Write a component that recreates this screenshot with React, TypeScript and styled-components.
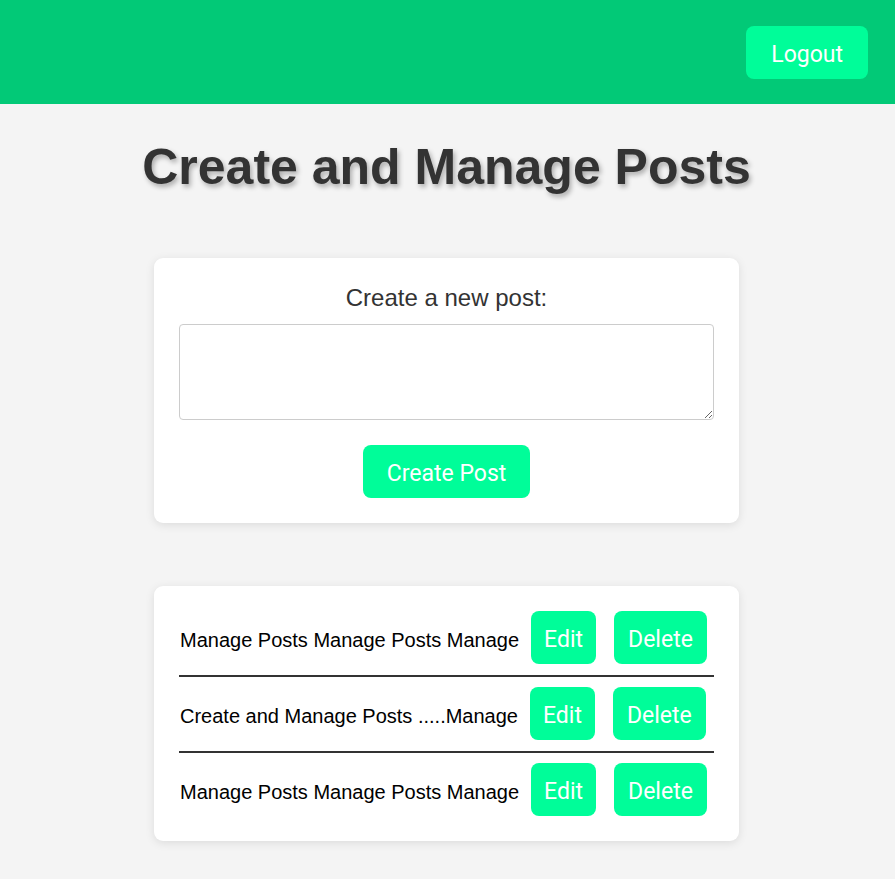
import React from "react";
import styled, { createGlobalStyle } from "styled-components";

const GlobalStyle = createGlobalStyle`
  html, body {
    margin: 0;
    padding: 0;
    background: #f4f4f4;
  }
  body {
    font-family: "Liberation Sans", Arial, sans-serif;
  }
`;

const Page = styled.div`
  min-height: 879px;
  background: #f4f4f4;
`;

const Header = styled.header`
  height: 104px;
  background: #02c977;
  display: flex;
  align-items: center;
  justify-content: flex-end;
  padding-right: 27px;
  box-sizing: border-box;
`;

const Main = styled.main`
  display: flex;
  flex-direction: column;
  align-items: center;
  padding-right: 2px;
`;

const Title = styled.h1`
  margin: 35px 0 62px;
  font-family: "Liberation Sans", Arial, sans-serif;
  font-size: 50px;
  line-height: 57px;
  font-weight: 700;
  color: #333;
  text-shadow: 2px 3px 5px rgba(0, 0, 0, 0.3);
`;

const Card = styled.section<{ $pad: string }>`
  width: 585px;
  box-sizing: border-box;
  background: #fff;
  border-radius: 9px;
  box-shadow: 0 2px 10px rgba(0, 0, 0, 0.1);
  padding: ${(p) => p.$pad};
  display: flex;
  flex-direction: column;
`;

const Spacer = styled.div`
  height: 63px;
  flex: none;
`;

const Label = styled.label`
  font-size: 24px;
  line-height: 28px;
  color: #333;
  text-align: center;
`;

const TextArea = styled.textarea`
  margin-top: 12px;
  height: 96px;
  box-sizing: border-box;
  border: 1px solid #ccc;
  border-radius: 4px;
  font-family: inherit;
  font-size: 16px;
  padding: 8px;
  outline: none;
  resize: both;
`;

const Button = styled.button<{ $px: number }>`
  background: #00fd99;
  color: #fff;
  border: none;
  border-radius: 8px;
  font-family: Roboto, "Open Sans", sans-serif;
  font-size: 23px;
  line-height: 27px;
  padding: 15px ${(p) => p.$px}px 11px;
  cursor: pointer;
  flex: none;
`;

const CreateButton = styled(Button)`
  align-self: center;
  margin-top: 25px;
`;

const Row = styled.div<{ $last?: boolean }>`
  display: flex;
  align-items: baseline;
  padding: 10px 0 11px;
  border-bottom: ${(p) => (p.$last ? "none" : "2px solid #333")};
`;

const PostText = styled.span`
  font-size: 20px;
  color: #000;
  white-space: nowrap;
  padding-left: 1px;
`;

const EditButton = styled(Button)`
  margin-left: 12px;
`;

const DeleteButton = styled(Button)`
  margin-left: 18px;
`;

const posts = [
  "Manage Posts Manage Posts Manage",
  "Create and Manage Posts .....Manage",
  "Manage Posts Manage Posts Manage",
];

export default function App() {
  return (
    <Page>
      <GlobalStyle />
      <Header>
        <Button $px={25}>Logout</Button>
      </Header>
      <Main>
        <Title>Create and Manage Posts</Title>
        <Card $pad="26px 25px 25px">
          <Label>Create a new post:</Label>
          <TextArea />
          <CreateButton $px={24}>Create Post</CreateButton>
        </Card>
        <Spacer />
        <Card $pad="15px 25px 14px">
          {posts.map((p, i) => (
            <Row key={i} $last={i === posts.length - 1}>
              <PostText>{p}</PostText>
              <EditButton $px={13}>Edit</EditButton>
              <DeleteButton $px={14}>Delete</DeleteButton>
            </Row>
          ))}
        </Card>
      </Main>
    </Page>
  );
}
